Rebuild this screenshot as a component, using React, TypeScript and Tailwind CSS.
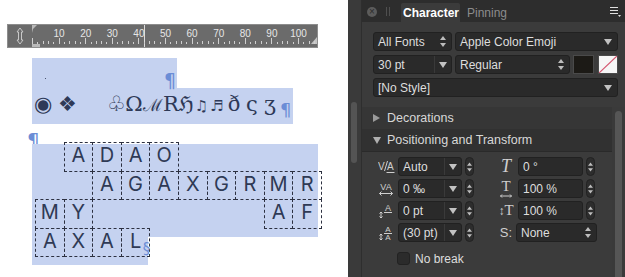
import React from "react";

const INK = "#cfcfcf";

function Ruler() {
  const unit = 2.66;
  const ticks: React.ReactNode[] = [];
  for (let u = 0; u <= 106; u += 2) {
    const x = Math.round(25 + u * unit) + 0.5;
    const long = u % 10 === 0;
    ticks.push(
      <line key={u} x1={x} x2={x} y1={long ? 14 : u % 10 === 4 || u % 10 === 6 ? 17 : 18} y2={20} stroke="#cfcfcf" />
    );
  }
  const labels = [10, 20, 30, 40, 50, 60, 70, 80, 90, 100];
  return (
    <svg width="311" height="24" viewBox="0 0 311 24" shapeRendering="crispEdges">
      <rect x="0.5" y="0.5" width="310" height="23" fill="#6b6b6b" stroke="#8d8d8d" />
      <path d="M13 4 L16 8 L14.5 8 L14.5 16 L16 16 L13 20 L10 16 L11.5 16 L11.5 8 L10 8 Z" fill="none" stroke="#c8c8c8" shapeRendering="auto" />
      <path d="M25 1 L30 1 L26 5 L25 9 Z" fill="#b9b9b9" shapeRendering="auto" />
      <rect x="25" y="20" width="8" height="3" fill="#b9b9b9" />
      <path d="M310 13 L310 20 L304 20 Z" fill="#c4c4c4" shapeRendering="auto" />
      <line x1="137.5" x2="137.5" y1="1" y2="23" stroke="#dcdcdc" />
      {ticks}
      {labels.map((n) => (
        <text
          key={n}
          x={25.5 + n * unit}
          y="13"
          fontSize="10"
          textAnchor="middle"
          fill="#e6e6e6"
          fontFamily="Liberation Sans, sans-serif"
          shapeRendering="auto"
        >
          {n}
        </text>
      ))}
    </svg>
  );
}

const cells: { ch: string; cls: string }[] = [
  { ch: "A", cls: "row-start-1 col-start-2" },
  { ch: "D", cls: "row-start-1 col-start-3" },
  { ch: "A", cls: "row-start-1 col-start-4" },
  { ch: "O", cls: "row-start-1 col-start-5" },
  { ch: "A", cls: "row-start-2 col-start-3" },
  { ch: "G", cls: "row-start-2 col-start-4" },
  { ch: "A", cls: "row-start-2 col-start-5" },
  { ch: "X", cls: "row-start-2 col-start-6" },
  { ch: "G", cls: "row-start-2 col-start-7" },
  { ch: "R", cls: "row-start-2 col-start-8" },
  { ch: "M", cls: "row-start-2 col-start-9" },
  { ch: "R", cls: "row-start-2 col-start-10" },
  { ch: "M", cls: "row-start-3 col-start-1" },
  { ch: "Y", cls: "row-start-3 col-start-2" },
  { ch: "A", cls: "row-start-3 col-start-9" },
  { ch: "F", cls: "row-start-3 col-start-10" },
  { ch: "A", cls: "row-start-4 col-start-1" },
  { ch: "X", cls: "row-start-4 col-start-2" },
  { ch: "A", cls: "row-start-4 col-start-3" },
  { ch: "L", cls: "row-start-4 col-start-4" },
];

// glyph + the width of the slot it takes on the line
const glyphs: { g: string; w: string }[] = [
  { g: "♧", w: "w-[18px]" },
  { g: "Ω", w: "w-[18px]" },
  { g: "ℳ", w: "w-[20px] text-[17px]" },
  { g: "R", w: "w-[14px]" },
  { g: "ℌ", w: "w-[17px]" },
  { g: "♫", w: "w-[15px] text-[15px]" },
  { g: "♬", w: "w-[16px] text-[15px]" },
  { g: "ð", w: "w-[18px]" },
  { g: "ς", w: "w-[18px]" },
  { g: "ʒ", w: "w-[18px]" },
];

function Canvas() {
  return (
    <div className="w-[348px] shrink-0 bg-white pt-[24px] font-['Inter',sans-serif]">
      <div className="ml-[7px]">
        <Ruler />
      </div>

      <div className="ml-[32px] mt-[10px] flex h-[30px] w-[145px] items-start justify-between bg-[#c5d2f0] pl-[13px] pr-[1px] pt-[13px]">
        <span className="mt-[7px] h-[1px] w-[1px] bg-[#4a5570]" />
        <span className="font-['DejaVu_Sans'] text-[19px] leading-none text-[#6b8dd6]">¶</span>
      </div>

      <div className="ml-[32px] flex h-[36px] w-[261px] items-baseline bg-[#c5d2f0] pt-[6px] font-['DejaVu_Serif',serif] text-[21px] leading-none text-[#2e3957]">
        <span className="ml-[2px] w-[18px] text-center">◉</span>
        <span className="ml-[4px] w-[23px] text-center">❖</span>
        <span className="ml-[28px] flex items-baseline">
          {glyphs.map((g, i) => (
            <span key={i} className={"text-center " + g.w}>
              {g.g}
            </span>
          ))}
        </span>
        <span className="ml-[1px] translate-y-[5px] font-['DejaVu_Sans'] text-[18px] text-[#6b8dd6]">¶</span>
      </div>

      <div className="h-[18px] pl-[27px] pt-[6px]">
        <span className="block h-[12px] font-['DejaVu_Sans'] text-[20px] leading-none text-[#6b8dd6]">¶</span>
      </div>

      <div className="relative ml-[32px]">
        <div className="absolute left-0 top-[2px] h-[93px] w-[286px] bg-[#c5d2f0]" />
        <div className="absolute left-0 top-[95px] h-[28px] w-[116px] bg-[#c5d2f0]" />
        <div className="relative ml-[3px] grid grid-cols-[repeat(10,28.6px)] grid-rows-[repeat(4,28.5px)]">
          {cells.map((c, i) => (
            <div
              key={i}
              className={
                c.cls +
                " relative -mb-px -mr-px flex items-center justify-center border border-dashed border-[#2c3040] pb-[3px] text-[20px] leading-none text-[#2f3a55]"
              }
            >
              {c.ch}
              {i === cells.length - 1 && (
                <span className="absolute left-[21px] top-[13px] font-['DejaVu_Sans'] text-[15px] leading-none text-[#6b8dd6]">§</span>
              )}
            </div>
          ))}
        </div>
      </div>
    </div>
  );
}

function Down() {
  return (
    <svg width="8" height="6" viewBox="0 0 8 6">
      <path d="M0 0h8L4 6z" fill="#c2c2c2" />
    </svg>
  );
}

function UpDown({ small }: { small?: boolean }) {
  return (
    <svg width={small ? 5 : 6} height={small ? 10 : 11} viewBox="0 0 6 11">
      <path d="M3 0L6 4H0z M3 11L0 7h6z" fill="#bdbdbd" />
    </svg>
  );
}

function Box({ className, children }: { className: string; children?: React.ReactNode }) {
  return (
    <div
      className={
        "flex h-[19px] items-center rounded-[3px] border border-[#212121] bg-[#2a2a2a] text-[12px] leading-none text-[#dedede] " +
        className
      }
    >
      {children}
    </div>
  );
}

function Stepper() {
  return (
    <div className="ml-[3px] flex h-[19px] w-[9px] items-center justify-center rounded-full border border-[#222] bg-[#2d2d2d]">
      <UpDown small />
    </div>
  );
}

function DropField({ text }: { text: string }) {
  return (
    <Box className="ml-[2px] w-[64px] justify-between pl-[4px]">
      <span>{text}</span>
      <span className="flex h-full w-[17px] items-center justify-center border-l border-[#3a3a3a]">
        <Down />
      </span>
    </Box>
  );
}

function IconCell({ children, className }: { children: React.ReactNode; className: string }) {
  return <div className={"flex h-[19px] items-center justify-center text-[#cfcfcf] " + className}>{children}</div>;
}

function KernIcon() {
  return (
    <svg width="17" height="14" viewBox="0 0 17 14">
      <text x="0" y="10" fontSize="10" fill={INK} fontFamily="Liberation Sans">
        V
      </text>
      <path d="M9.5 1L6.5 11" stroke={INK} />
      <text x="9" y="10" fontSize="10" fill={INK} fontFamily="Liberation Sans">
        A
      </text>
      <path d="M8.5 12.5h8" stroke={INK} />
    </svg>
  );
}

function TrackIcon() {
  return (
    <svg width="16" height="14" viewBox="0 0 16 14">
      <text x="8" y="8" fontSize="9" textAnchor="middle" fill={INK} fontFamily="Liberation Sans">
        VA
      </text>
      <path d="M1.5 11.5h13 M1.5 11.5l2-2 M1.5 11.5l2 2 M14.5 11.5l-2-2 M14.5 11.5l-2 2" stroke={INK} fill="none" />
    </svg>
  );
}

function ShiftIcon() {
  return (
    <svg width="16" height="16" viewBox="0 0 16 16">
      <text x="10" y="8" fontSize="9" textAnchor="middle" fill={INK} fontFamily="Liberation Sans">
        A
      </text>
      <path d="M6 9.5h8" stroke={INK} />
      <path d="M3 9v6 M1.5 10.5L3 9l1.5 1.5 M1.5 13.5L3 15l1.5-1.5" stroke={INK} fill="none" />
    </svg>
  );
}

function LeadIcon() {
  return (
    <svg width="16" height="16" viewBox="0 0 16 16">
      <text x="10" y="7" fontSize="8" textAnchor="middle" fill={INK} fontFamily="Liberation Sans">
        A
      </text>
      <path d="M6 8.5h8" stroke={INK} />
      <text x="10" y="15" fontSize="8" textAnchor="middle" fill={INK} fontFamily="Liberation Sans">
        A
      </text>
      <path d="M3 9v6 M1.5 10.5L3 9l1.5 1.5 M1.5 13.5L3 15l1.5-1.5" stroke={INK} fill="none" />
    </svg>
  );
}

function Panel() {
  return (
    <div className="flex w-[277px] shrink-0 bg-[#3b3b3b] font-['Liberation_Sans',Arial,sans-serif]">
      <div className="w-[13px] shrink-0 bg-[#3a3a3a]">
        <div className="ml-[3px] mt-[102px] h-[61px] w-[6px] rounded-full bg-[#545454]" />
      </div>

      <div className="flex flex-1 flex-col border-l border-[#2e2e2e]">
        <div className="flex h-[22px] shrink-0 items-end bg-[#2d2d2d]">
          <div className="mb-[5px] ml-[5px] flex h-[10px] w-[10px] items-center justify-center rounded-full bg-[#5c5c5c] text-[10px] leading-none text-[#2d2d2d]">
            ×
          </div>
          <div className="mb-[6px] ml-[9px] flex h-[9px] gap-[2px]">
            <span className="w-px bg-[#4f4f4f]" />
            <span className="w-px bg-[#4f4f4f]" />
          </div>
          <div className="ml-[11px] flex h-[19px] w-[59px] items-center rounded-t-[2px] bg-[#3b3b3b] pl-[2px] text-[12px] font-bold text-white">
            Character
          </div>
          <div className="ml-[7px] flex h-[19px] items-center text-[12px] text-[#8c8c8c]">Pinning</div>
          <div className="mb-[5px] ml-auto mr-[4px]">
            <svg width="11" height="11" viewBox="0 0 11 11">
              <path d="M0 1.5h8 M0 4.5h8 M0 7.5h8" stroke="#e0e0e0" />
              <path d="M8 9h3l-1.5 2z" fill="#e0e0e0" />
            </svg>
          </div>
        </div>

        <div className="shrink-0 pb-[10px] pl-[11px] pr-[7px] pt-[10px]">
          <div className="flex h-[19px]">
            <Box className="w-[79px] justify-between pl-[4px] pr-[5px]">
              <span>All Fonts</span>
              <UpDown />
            </Box>
            <Box className="ml-[3px] flex-1 justify-between pl-[4px] pr-[5px]">
              <span>Apple Color Emoji</span>
              <Down />
            </Box>
          </div>
          <div className="mt-[4px] flex h-[19px]">
            <Box className="w-[79px] justify-between pl-[4px]">
              <span>30 pt</span>
              <span className="flex h-full w-[17px] items-center justify-center border-l border-[#3a3a3a]">
                <Down />
              </span>
            </Box>
            <Box className="ml-[3px] w-[115px] justify-between pl-[4px] pr-[5px]">
              <span>Regular</span>
              <UpDown />
            </Box>
            <div className="ml-[3px] h-[19px] w-[21px] border border-[#4a4a4a] bg-[#1c1a16]" />
            <div className="ml-[4px] h-[19px] flex-1 border border-[#4a4a4a] bg-[#f6f6f6]">
              <svg width="100%" height="100%" viewBox="0 0 18 17" preserveAspectRatio="none">
                <path d="M0 17L18 0" stroke="#d4546e" strokeWidth="1.2" />
              </svg>
            </div>
          </div>
          <div className="mt-[4px] flex h-[19px]">
            <Box className="flex-1 justify-between pl-[4px] pr-[5px]">
              <span>[No Style]</span>
              <Down />
            </Box>
          </div>
        </div>

        <div className="flex flex-1">
          <div className="flex w-[250px] flex-col">
            <div className="flex h-[22px] shrink-0 items-center bg-[#363636] pl-[11px] text-[12.5px] text-[#d8d8d8]">
              <svg width="7" height="8" viewBox="0 0 7 8">
                <path d="M0 0L7 4L0 8z" fill="#9a9a9a" />
              </svg>
              <span className="ml-[7px]">Decorations</span>
            </div>
            <div className="flex h-[22px] shrink-0 items-center bg-[#313131] pl-[11px] text-[12.5px] text-[#d8d8d8]">
              <svg width="8" height="7" viewBox="0 0 8 7">
                <path d="M0 0h8L4 7z" fill="#b0b0b0" />
              </svg>
              <span className="ml-[6px]">Positioning and Transform</span>
            </div>

            <div className="flex-1 border-t border-[#2a2a2a] bg-[#3b3b3b] pl-[14px] pt-[5px]">
              <div className="flex h-[19px] items-center">
                <IconCell className="w-[20px]">
                  <KernIcon />
                </IconCell>
                <DropField text="Auto" />
                <Stepper />
                <IconCell className="ml-[23px] w-[18px] font-['Liberation_Serif'] text-[18px] italic">T</IconCell>
                <Box className="ml-[3px] w-[65px] pl-[4px]">0 °</Box>
                <Stepper />
              </div>
              <div className="mt-[3px] flex h-[19px] items-center">
                <IconCell className="w-[20px]">
                  <TrackIcon />
                </IconCell>
                <DropField text="0 ‰" />
                <Stepper />
                <IconCell className="ml-[23px] w-[18px]">
                  <span className="flex flex-col items-center leading-none">
                    <span className="font-['Liberation_Serif'] text-[15px]">T</span>
                    <svg width="12" height="4" viewBox="0 0 12 4">
                      <path d="M0.5 2h11 M0.5 2l1.5-1.5 M0.5 2l1.5 1.5 M11.5 2l-1.5-1.5 M11.5 2l-1.5 1.5" stroke={INK} fill="none" />
                    </svg>
                  </span>
                </IconCell>
                <Box className="ml-[3px] w-[65px] pl-[4px]">100 %</Box>
                <Stepper />
              </div>
              <div className="mt-[3px] flex h-[19px] items-center">
                <IconCell className="w-[20px]">
                  <ShiftIcon />
                </IconCell>
                <DropField text="0 pt" />
                <Stepper />
                <IconCell className="ml-[23px] w-[18px] font-['Liberation_Serif'] text-[15px]">
                  <span className="text-[12px]">↕</span>T
                </IconCell>
                <Box className="ml-[3px] w-[65px] pl-[4px]">100 %</Box>
                <Stepper />
              </div>
              <div className="mt-[3px] flex h-[19px] items-center">
                <IconCell className="w-[20px]">
                  <LeadIcon />
                </IconCell>
                <DropField text="(30 pt)" />
                <Stepper />
                <IconCell className="ml-[23px] w-[18px] text-[13px]">S:</IconCell>
                <Box className="ml-[1px] w-[81px] justify-between pl-[4px] pr-[5px]">
                  <span>None</span>
                  <UpDown />
                </Box>
              </div>
              <div className="mt-[10px] flex h-[13px] items-center pl-[21px]">
                <div className="h-[13px] w-[13px] rounded-[3px] border border-[#222] bg-[#2b2b2b]" />
                <span className="ml-[5px] text-[12px] text-[#dedede]">No break</span>
              </div>
            </div>
            <div className="h-[3px] shrink-0 bg-[#2a2a2a]" />
          </div>
          <div className="flex-1 bg-[#3a3a3a]">
            <div className="ml-[3px] mt-[4px] h-[170px] w-[7px] rounded-full bg-[#565656]" />
          </div>
        </div>
      </div>
    </div>
  );
}

export default function App() {
  return (
    <div className="flex h-[277px] w-[625px] overflow-hidden">
      <Canvas />
      <Panel />
    </div>
  );
}
